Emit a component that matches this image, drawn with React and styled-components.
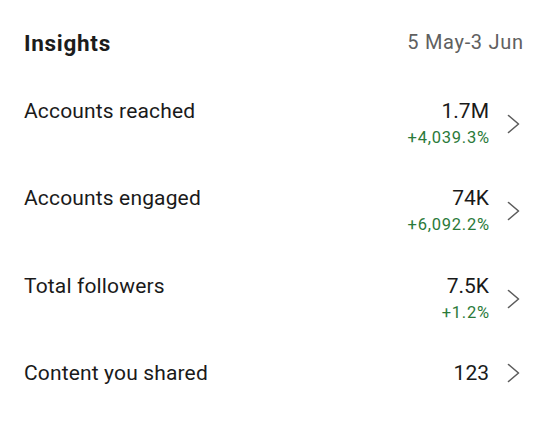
import React from "react";
import styled, { createGlobalStyle } from "styled-components";

const GlobalStyle = createGlobalStyle`
  html, body {
    margin: 0;
    padding: 0;
    background: #ffffff;
  }
  body {
    font-family: Roboto, "Noto Sans", "Liberation Sans", sans-serif;
    -webkit-font-smoothing: antialiased;
  }
`;

const Page = styled.div`
  width: 548px;
  height: 424px;
  box-sizing: border-box;
  padding: 29px 25px 0 24px;
  background: #ffffff;
  display: flex;
  flex-direction: column;
  gap: 41.5px;
`;

const Header = styled.header`
  display: flex;
  justify-content: space-between;
  align-items: flex-start;
`;

const Title = styled.h1`
  margin: 0;
  font-size: 22.5px;
  line-height: 28px;
  font-weight: 700;
  color: #1c1c1c;
  letter-spacing: 0.7px;
`;

const DateRange = styled.span`
  margin-top: 0.5px;
  margin-right: -0.7px;
  font-size: 20px;
  line-height: 24px;
  letter-spacing: 0.7px;
  color: #606060;
`;

const List = styled.ul`
  list-style: none;
  margin: 0;
  padding: 0;
  display: flex;
  flex-direction: column;
  gap: 37.5px;
`;

const Row = styled.li`
  display: flex;
  align-items: flex-start;
`;

const Label = styled.span`
  flex: 1;
  font-size: 21px;
  line-height: 24px;
  letter-spacing: 0.15px;
  color: #1a1a1a;
`;

const Stats = styled.div`
  display: flex;
  flex-direction: column;
  align-items: flex-end;
`;

const Value = styled.span`
  font-size: 21px;
  line-height: 24px;
  color: #1a1a1a;
`;

const Delta = styled.span`
  margin-top: 4px;
  margin-right: -0.75px;
  font-size: 16.5px;
  line-height: 22px;
  letter-spacing: 0.75px;
  color: #2b7a3a;
`;

const Chevron = styled.svg`
  flex: none;
  align-self: center;
  margin-left: 18px;
  width: 16px;
  height: 24px;
`;

const rows = [
  { label: "Accounts reached", value: "1.7M", delta: "+4,039.3%" },
  { label: "Accounts engaged", value: "74K", delta: "+6,092.2%" },
  { label: "Total followers", value: "7.5K", delta: "+1.2%" },
  { label: "Content you shared", value: "123" },
];

function ChevronIcon() {
  return (
    <Chevron viewBox="0 0 16 24" fill="none">
      <path
        d="M1.5 3.5 L11.5 12 L1.5 20.5"
        stroke="#5c5c5c"
        strokeWidth="1.6"
        strokeLinecap="round"
        strokeLinejoin="round"
      />
    </Chevron>
  );
}

export default function App() {
  return (
    <>
      <GlobalStyle />
      <Page>
        <Header>
          <Title>Insights</Title>
          <DateRange>5 May-3 Jun</DateRange>
        </Header>
        <List>
          {rows.map((r) => (
            <Row key={r.label}>
              <Label>{r.label}</Label>
              <Stats>
                <Value>{r.value}</Value>
                {r.delta && <Delta>{r.delta}</Delta>}
              </Stats>
              <ChevronIcon />
            </Row>
          ))}
        </List>
      </Page>
    </>
  );
}
